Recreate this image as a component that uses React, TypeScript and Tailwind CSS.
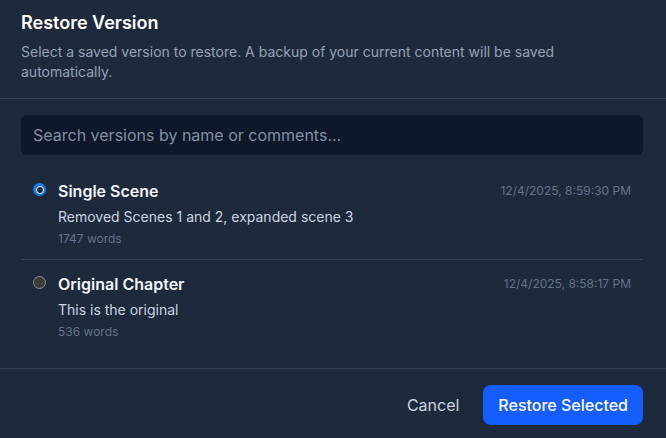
const versions = [
  {
    name: "Single Scene",
    date: "12/4/2025, 8:59:30 PM",
    comment: "Removed Scenes 1 and 2, expanded scene 3",
    words: 1747,
    selected: true,
  },
  {
    name: "Original Chapter",
    date: "12/4/2025, 8:58:17 PM",
    comment: "This is the original",
    words: 536,
    selected: false,
  },
];

function Radio({ checked }: { checked: boolean }) {
  if (checked) {
    return (
      <span className="mt-[4px] flex h-[13px] w-[13px] shrink-0 items-center justify-center rounded-full bg-[#1a7cf0]">
        <span className="h-[8px] w-[8px] rounded-full border border-[#e6eefb] bg-[#1e293b]" />
      </span>
    );
  }
  return (
    <span className="mt-[4px] h-[13px] w-[13px] shrink-0 rounded-full border border-[#8d8d8d] bg-[#3b3b3b]" />
  );
}

export default function App() {
  return (
    <div
      className="flex h-[438px] w-[666px] flex-col bg-[#1e293b]"
      style={{ fontFamily: "Inter, 'Noto Sans', sans-serif" }}
    >
      <header className="border-b border-[#334155] pl-[21px] pr-[23px] pb-[16px] pt-[9px]">
        <h2 className="text-lg font-semibold leading-7 text-white">Restore Version</h2>
        <p className="mt-[5px] text-sm leading-5 text-[#94a3b8]">
          Select a saved version to restore. A backup of your current content will be saved
          automatically.
        </p>
      </header>

      <div className="flex-1 pl-[21px] pr-[23px] pt-4">
        <input
          type="text"
          placeholder="Search versions by name or comments..."
          className="h-10 w-full rounded-md bg-[#0f172a] px-3 text-base text-slate-200 placeholder:text-[#8390a3] outline-none"
        />

        <ul className="mt-[12px]">
          {versions.map((v, i) => (
            <li
              key={v.name}
              className={`flex gap-3 px-3 py-3 ${i < versions.length - 1 ? "border-b border-[#334155]" : ""}`}
            >
              <Radio checked={v.selected} />
              <div className="flex-1">
                <div className="flex items-center justify-between">
                  <span className="text-base font-semibold leading-6 text-[#f1f5f9]">{v.name}</span>
                  <span className="text-xs text-[#64748b]">{v.date}</span>
                </div>
                <p className="mt-1 text-sm leading-5 text-[#cbd5e1]">{v.comment}</p>
                <p className="mt-1 text-xs leading-4 text-[#64748b]">{v.words} words</p>
              </div>
            </li>
          ))}
        </ul>
      </div>

      <footer className="flex h-[70px] items-start justify-end gap-2 border-t border-[#334155] px-[23px] pt-4">
        <button className="h-10 px-4 text-base text-[#cbd5e1]">Cancel</button>
        <button className="h-10 rounded-lg bg-[#155dfc] px-[15px] text-base font-medium text-white">
          Restore Selected
        </button>
      </footer>
    </div>
  );
}
